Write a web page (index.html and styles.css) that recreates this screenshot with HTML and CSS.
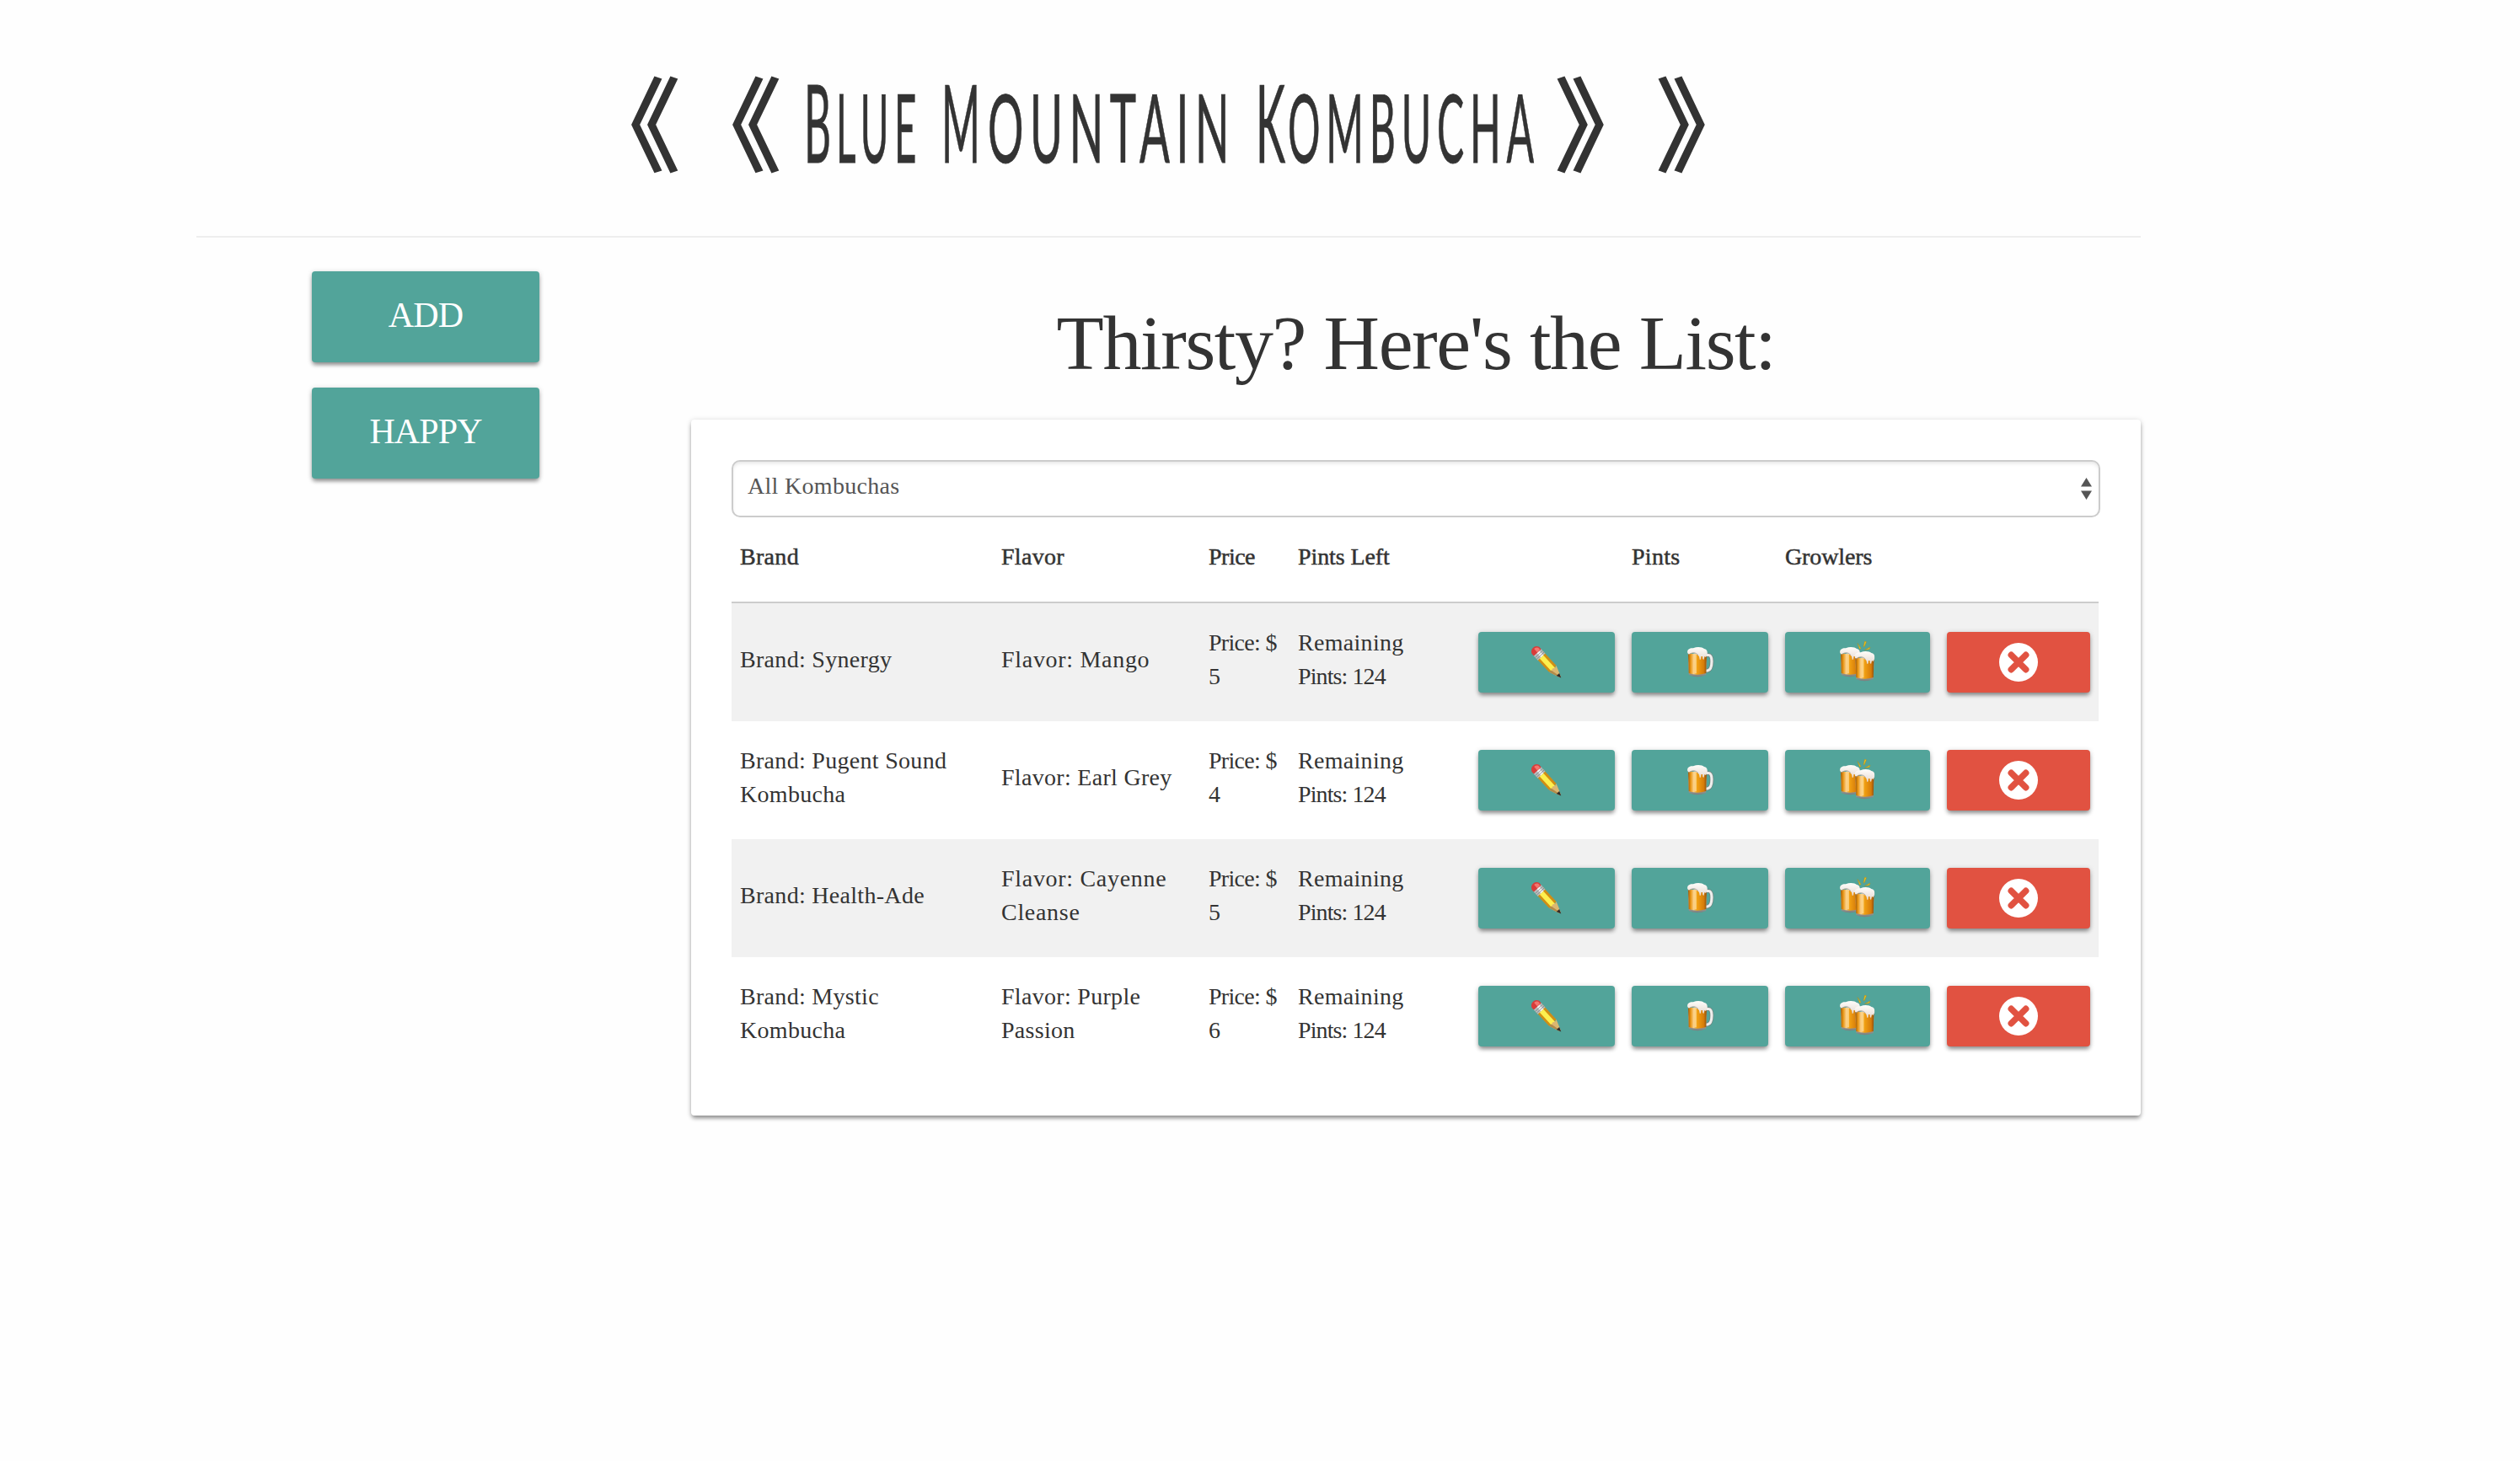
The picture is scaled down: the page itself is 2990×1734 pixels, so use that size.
FILE: index.html
```html
<!DOCTYPE html>
<html lang="en">
<head>
<meta charset="utf-8">
<title>Blue Mountain Kombucha</title>
<link rel="stylesheet" href="styles.css">
</head>
<body>
<svg class="sprites" aria-hidden="true">
  <defs>
    <linearGradient id="beer" x1="0" x2="1" y1="0" y2="0">
      <stop offset="0" stop-color="#9a5b10"/><stop offset=".13" stop-color="#e8930f"/>
      <stop offset=".3" stop-color="#fbd08a"/><stop offset=".48" stop-color="#f2a113"/>
      <stop offset=".85" stop-color="#d57b0a"/><stop offset="1" stop-color="#8a4c0c"/>
    </linearGradient>
    <linearGradient id="foam" x1="0" x2="0" y1="0" y2="1">
      <stop offset="0" stop-color="#fffdfa"/><stop offset="1" stop-color="#e6dad2"/>
    </linearGradient>
    <linearGradient id="glass" x1="0" x2="0" y1="0" y2="1">
      <stop offset="0" stop-color="#8d8173"/><stop offset=".4" stop-color="#e5e5e2"/><stop offset="1" stop-color="#7b7d7b"/>
    </linearGradient>
    <symbol id="glass-body" viewBox="0 0 24 36">
      <path d="M1 8 L1.800 33 Q12 37.500 22.200 33 L23 8Z" fill="url(#glass)"/>
      <path d="M1 8 L1.700 31 Q12 34.500 22.300 31 L23 8Z" fill="url(#beer)"/>
      <path d="M8 8h3v23H8.500z" fill="#ffe2a6" opacity=".55"/>
      <path d="M.3 7C-.8 3 3 .8 7 1.300 12-.8 18 .2 20 2 23 2.500 24.500 5 23.500 9.500L22 12 20.500 11 19.500 15 18.300 14 18 11 16.500 11 16 14.500 14.800 15 14 11 12.500 9.500Q7 5 1.500 8.500Z" fill="url(#foam)"/>
      <path d="M2 9Q8 4 13 9.500" fill="none" stroke="#a59b92" stroke-width=".8"/>
    </symbol>
    <symbol id="pencil" viewBox="0 0 38 38">
      <g transform="translate(5.200 4.200) rotate(47)">
        <path d="M7-5.800H31V5.800H7z" fill="#d18e14"/>
        <path d="M11-2.800H32V3H11z" fill="#fdf04f"/>
        <path d="M31-5.800L44-.8V.8L31 5.800 32 3 30.500 0 32-3z" fill="#dbb771"/>
        <path d="M31 5.800L44 .8 43-.2 31 2.500z" fill="#b28a49"/>
        <path d="M40-2.300L45.500 0 40 2.300z" fill="#302b29"/>
        <path d="M4-6H11.500V6H4z" fill="#b9bcbd"/>
        <path d="M4-3H11.500V1H4z" fill="#f3f3f3"/>
        <path d="M7-6V6M9.500-6V6" stroke="#77797b" stroke-width=".7"/>
        <path d="M4.500-6V6H1Q-3.500 4-3.200 0-3.500-4 1-6z" fill="#d93c3a"/>
        <path d="M1-4.500H4V0H-1.500Q-2-3 1-4.500z" fill="#f4776f"/>
      </g>
    </symbol>
    <symbol id="mug" viewBox="0 0 32 37">
      <path d="M21 9.500H25Q29 9.500 29 17 29 27 24 28H21" fill="none" stroke="#72807d" stroke-width="4.600"/>
      <path d="M21 9.500H25Q29 9.500 29 17 29 27 24 28H21" fill="none" stroke="#eeeeec" stroke-width="3.200"/>
      <use href="#glass-body" x="0" y="0" width="24" height="36"/>
    </symbol>
    <symbol id="cheers" viewBox="0 0 42 48">
      <use href="#glass-body" x="0" y="7" width="24" height="36"/>
      <use href="#glass-body" x="17.500" y="12" width="24" height="36"/>
      <path d="M21 2.500l4 6-1.500 1zM29.500 0l2 .8-2.500 6-1-.4zM36 7l-1 2.500-5.500 1z" fill="#f2c51b" stroke="#a98a22" stroke-width=".5"/>
    </symbol>
    <symbol id="remove" viewBox="0 0 46 46">
      <circle cx="23" cy="23" r="23" fill="#fff"/>
      <path d="M14.300 14.300L31.700 31.700M31.700 14.300L14.300 31.700" stroke="#e15241" stroke-width="7.500" stroke-linecap="round"/>
    </symbol>
  </defs>
</svg>

<div class="page">
  <header class="masthead">
    <svg class="logo" viewBox="0 0 2307 280" role="heading" aria-level="1">
      <g class="bracket">
        <text x="454" y="194">《</text><text x="574" y="194">《</text>
      </g>
      <g class="name">
        <text class="initial" x="721" y="193" textLength="32" lengthAdjust="spacingAndGlyphs">B</text>
        <text x="759" y="193" textLength="102" lengthAdjust="spacingAndGlyphs">LUE</text>
        <text class="initial" x="884" y="193" textLength="46" lengthAdjust="spacingAndGlyphs">M</text>
        <text x="939" y="193" textLength="294" lengthAdjust="spacingAndGlyphs">OUNTAIN</text>
        <text class="initial" x="1257" y="193" textLength="35" lengthAdjust="spacingAndGlyphs">K</text>
        <text x="1295" y="193" textLength="299" lengthAdjust="spacingAndGlyphs">OMBUCHA</text>
      </g>
      <g class="bracket">
        <text x="1612" y="194">》</text><text x="1732" y="194">》</text>
      </g>
    </svg>
  </header>

  <div class="columns">
    <nav class="actions">
      <button class="btn btn-large">ADD</button>
      <button class="btn btn-large">HAPPY</button>
    </nav>
    <main class="content">
      <h2>Thirsty? Here's the List:</h2>
      <section class="card">
        <div class="select">
          <span>All Kombuchas</span>
          <svg class="arrows" viewBox="0 0 13 26"><path d="M6.500 0L13 10.500H0zM0 15.500H13L6.500 26z" fill="#555"/></svg>
        </div>
        <table>
          <colgroup><col class="w-brand"><col class="w-flavor"><col class="w-price"><col class="w-left"><col class="w-edit"><col class="w-pint"><col class="w-growler"><col class="w-remove"></colgroup>
          <thead><tr><th>Brand</th><th>Flavor</th><th class="t-price">Price</th><th class="t-left">Pints Left</th><th></th><th>Pints</th><th class="t-left">Growlers</th><th></th></tr></thead>
          <tbody>
            <tr><td>Brand: Synergy</td><td class="flavor">Flavor: Mango</td><td class="price">Price: $<br>5</td><td>Remaining<br><span class="count">Pints: 124</span></td>
              <td class="act"><button class="btn"><svg class="i-pencil"><use href="#pencil"/></svg></button></td><td class="act"><button class="btn"><svg class="i-mug"><use href="#mug"/></svg></button></td><td class="act"><button class="btn"><svg class="i-cheers"><use href="#cheers"/></svg></button></td><td class="act"><button class="btn btn-danger"><svg class="i-remove"><use href="#remove"/></svg></button></td></tr>
            <tr><td>Brand: Pugent Sound<br>Kombucha</td><td>Flavor: Earl Grey</td><td class="price">Price: $<br>4</td><td>Remaining<br><span class="count">Pints: 124</span></td>
              <td class="act"><button class="btn"><svg class="i-pencil"><use href="#pencil"/></svg></button></td><td class="act"><button class="btn"><svg class="i-mug"><use href="#mug"/></svg></button></td><td class="act"><button class="btn"><svg class="i-cheers"><use href="#cheers"/></svg></button></td><td class="act"><button class="btn btn-danger"><svg class="i-remove"><use href="#remove"/></svg></button></td></tr>
            <tr><td>Brand: Health-Ade</td><td class="flavor">Flavor: Cayenne<br>Cleanse</td><td class="price">Price: $<br>5</td><td>Remaining<br><span class="count">Pints: 124</span></td>
              <td class="act"><button class="btn"><svg class="i-pencil"><use href="#pencil"/></svg></button></td><td class="act"><button class="btn"><svg class="i-mug"><use href="#mug"/></svg></button></td><td class="act"><button class="btn"><svg class="i-cheers"><use href="#cheers"/></svg></button></td><td class="act"><button class="btn btn-danger"><svg class="i-remove"><use href="#remove"/></svg></button></td></tr>
            <tr><td>Brand: Mystic<br>Kombucha</td><td>Flavor: Purple<br>Passion</td><td class="price">Price: $<br>6</td><td>Remaining<br><span class="count">Pints: 124</span></td>
              <td class="act"><button class="btn"><svg class="i-pencil"><use href="#pencil"/></svg></button></td><td class="act"><button class="btn"><svg class="i-mug"><use href="#mug"/></svg></button></td><td class="act"><button class="btn"><svg class="i-cheers"><use href="#cheers"/></svg></button></td><td class="act"><button class="btn btn-danger"><svg class="i-remove"><use href="#remove"/></svg></button></td></tr>
          </tbody>
        </table>
      </section>
    </main>
  </div>
</div>
</body>
</html>
```
FILE: styles.css
```css
* { box-sizing: border-box; }
body {
  margin: 0;
  min-height: 100vh;
  background: #fefefe;
  color: #333;
  font: 28px/40px "Liberation Serif", serif;
  letter-spacing: .3px;
}
.sprites { display: block; width: 0; height: 0; }
.page { width: 2307px; margin-left: 233px; padding-bottom: 60px; }

.masthead { height: 282px; border-bottom: 2px solid #eee; }
.logo { display: block; width: 2307px; height: 280px; fill: #333; }
.bracket {
  font: 400 120px "Noto Sans CJK JP", sans-serif;
  letter-spacing: 0;
  stroke: #333;
  stroke-width: 2.5px;
}
.name {
  font: 400 112px Lato, sans-serif;
  letter-spacing: 16px;
  stroke: #333;
  stroke-width: .8px;
}
.initial { font-size: 128px; letter-spacing: 0; }

.columns { display: flex; justify-content: space-between; }
.actions {
  display: flex;
  flex-direction: column;
  gap: 30px;
  padding: 40px 0 0 137px;
}
.content { width: 1720px; }

h2 {
  height: 216px;
  margin: 0;
  padding-top: 75px;
  font-size: 92px;
  line-height: 100px;
  font-weight: 400;
  letter-spacing: -1.400px;
  text-align: center;
}

.btn {
  display: flex;
  align-items: center;
  justify-content: center;
  width: 100%;
  height: 72px;
  padding: 0;
  border: 0;
  border-radius: 4px;
  background: #52a49a;
  color: #fff;
  box-shadow: 0 4px 5px -1px rgba(0, 0, 0, .38), 0 1px 6px rgba(0, 0, 0, .18);
}
.btn-large {
  width: 270px;
  height: 108px;
  padding-bottom: 5px;
  font: 42px/60px "Liberation Serif", serif;
  letter-spacing: -.9px;
}
.btn-danger { background: #e15241; }

.card {
  height: 826px;
  padding: 48px;
  border-radius: 4px;
  background: #fff;
  box-shadow: 0 4px 5px -1px rgba(0, 0, 0, .38), 0 1px 6px rgba(0, 0, 0, .18);
}
.select {
  display: flex;
  align-items: center;
  justify-content: space-between;
  height: 68px;
  padding: 0 8px 0 17px;
  border: 2px solid #ccc;
  border-radius: 10px;
  box-shadow: inset 0 3px 4px -1px rgba(0, 0, 0, .1);
  color: #555;
}
.select span { padding-bottom: 6px; }
.arrows { width: 13px; height: 26px; }

table { width: 1622px; border-collapse: separate; border-spacing: 0; table-layout: fixed; }
.w-brand { width: 310px; }
.w-flavor { width: 246px; }
.w-price { width: 106px; }
.w-left { width: 214px; }
.w-edit, .w-pint { width: 182px; }
.w-growler { width: 192px; }
.w-remove { width: 190px; }

th {
  height: 102px;
  padding: 27px 0 33px 10px;
  border-bottom: 2px solid #ccc;
  font-weight: 400;
  text-align: left;
  vertical-align: top;
  -webkit-text-stroke: .5px #333;
}
td { height: 140px; padding: 0 0 6px 10px; vertical-align: middle; white-space: nowrap; }
td.act { padding: 0 10px; }
tbody tr:nth-child(odd) { background: #f1f1f1; }
.flavor { letter-spacing: .7px; }
.price { letter-spacing: -.7px; }
.count { letter-spacing: -.9px; }
.t-price { letter-spacing: -.5px; }
.t-left { letter-spacing: -.1px; }

.i-pencil { width: 38px; height: 38px; }
.i-mug { width: 32px; height: 37px; margin-left: 2px; }
.i-cheers { width: 42px; height: 48px; margin-top: -3px; }
.i-remove { width: 46px; height: 46px; margin-top: -1px; }
```
